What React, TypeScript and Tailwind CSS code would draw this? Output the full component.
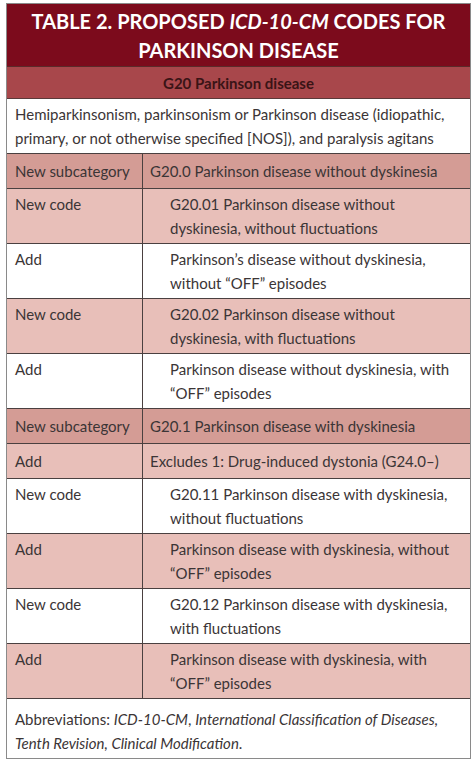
import React from "react";

type Row = { label: string; text: React.ReactNode; bg: string; indent?: boolean; two?: boolean };

const SUB = "bg-[#d49c95]";
const LIGHT = "bg-[#e8bfb9]";
const WHITE = "bg-white";

const rows: Row[] = [
  { label: "New subcategory", text: "G20.0 Parkinson disease without dyskinesia", bg: SUB },
  { label: "New code", text: <>G20.01 Parkinson disease without<br />dyskinesia, without fluctuations</>, bg: LIGHT, indent: true, two: true },
  { label: "Add", text: <>Parkinson’s disease without dyskinesia,<br />without “OFF” episodes</>, bg: WHITE, indent: true, two: true },
  { label: "New code", text: <>G20.02 Parkinson disease without<br />dyskinesia, with fluctuations</>, bg: LIGHT, indent: true, two: true },
  { label: "Add", text: <>Parkinson disease without dyskinesia, with<br />“OFF” episodes</>, bg: WHITE, indent: true, two: true },
  { label: "New subcategory", text: "G20.1 Parkinson disease with dyskinesia", bg: SUB },
  { label: "Add", text: "Excludes 1: Drug-induced dystonia (G24.0–)", bg: LIGHT },
  { label: "New code", text: <>G20.11 Parkinson disease with dyskinesia,<br />without fluctuations</>, bg: WHITE, indent: true, two: true },
  { label: "Add", text: <>Parkinson disease with dyskinesia, without<br />“OFF” episodes</>, bg: LIGHT, indent: true, two: true },
  { label: "New code", text: <>G20.12 Parkinson disease with dyskinesia,<br />with fluctuations</>, bg: WHITE, indent: true, two: true },
  { label: "Add", text: <>Parkinson disease with dyskinesia, with<br />“OFF” episodes</>, bg: LIGHT, indent: true, two: true },
];

export default function App() {
  return (
    <div className="w-[474px] h-[763px] bg-white pt-[3px] pl-[6px]" style={{ fontFamily: "Lato, 'Open Sans', sans-serif" }}>
      <div className="w-[465px] border border-[#8a8a8a] text-[#3b3536] whitespace-nowrap">
        <div className="bg-[#7c0b1c] text-white text-center font-bold text-[20px] leading-[29px] pt-[3px] pb-[1px] border-b border-[#5a2a2a]">
          TABLE 2. PROPOSED <i>ICD-10-CM</i> CODES FOR
          <br />
          PARKINSON DISEASE
        </div>
        <div className="bg-[#a8474b] text-[#3a1416] text-center font-bold text-[15px] leading-[22px] pt-[5px] pb-[4px] border-b border-[#5a3a3a]">
          G20 Parkinson disease
        </div>
        <div className="bg-white text-[15px] leading-[24px] px-[8px] py-[3px] border-b border-[#4a4040]">
          Hemiparkinsonism, parkinsonism or Parkinson disease (idiopathic,
          <br />
          primary, or not otherwise specified [NOS]), and paralysis agitans
        </div>
        {rows.map((r, i) => (
          <div key={i} className={`grid grid-cols-[136px_1fr] border-b border-[#4a4040] ${r.bg} text-[15px] leading-[24px]`}>
            <div className={`px-[8px] ${r.two ? "py-[3px]" : "py-[5px]"} border-r border-[#4a4040]`}>{r.label}</div>
            <div className={`${r.indent ? "pl-[27px]" : "pl-[7px]"} pr-[4px] ${r.two ? "py-[3px]" : "py-[5px]"}`}>{r.text}</div>
          </div>
        ))}
        <div className="bg-white text-[15px] leading-[24px] px-[8px] pt-[8px] pb-[3px]">
          Abbreviations: <i>ICD-10-CM</i>, <i>International Classification of Diseases,</i>
          <br />
          <i>Tenth Revision, Clinical Modification</i>.
        </div>
      </div>
    </div>
  );
}
